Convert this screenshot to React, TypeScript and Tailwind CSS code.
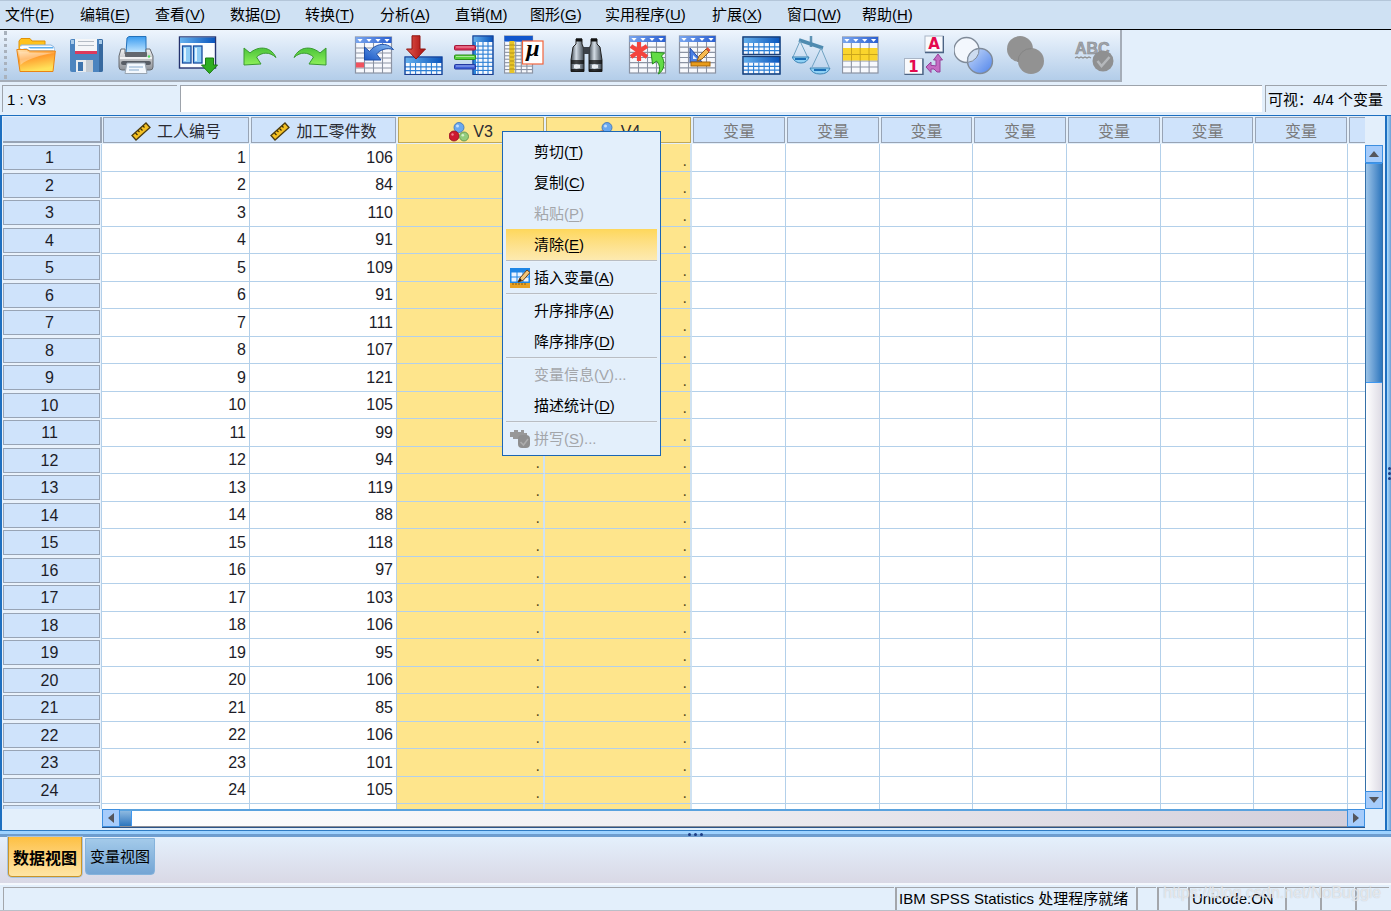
import React from "react";

type MenuEntry = { label: string; hotkey: string; dots?: boolean };

const menuBar: MenuEntry[] = [
  { label: "文件", hotkey: "F" },
  { label: "编辑", hotkey: "E" },
  { label: "查看", hotkey: "V" },
  { label: "数据", hotkey: "D" },
  { label: "转换", hotkey: "T" },
  { label: "分析", hotkey: "A" },
  { label: "直销", hotkey: "M" },
  { label: "图形", hotkey: "G" },
  { label: "实用程序", hotkey: "U" },
  { label: "扩展", hotkey: "X" },
  { label: "窗口", hotkey: "W" },
  { label: "帮助", hotkey: "H" },
];

const parts = [
  106, 84, 110, 91, 109, 91, 111, 107, 121, 105, 99, 94, 119, 88, 118, 97, 103, 106, 95, 106, 85,
  106, 101, 105,
];

function Label({ label, hotkey, dots }: MenuEntry) {
  return (
    <>
      {label}(<span className="underline underline-offset-2">{hotkey}</span>){dots ? "..." : ""}
    </>
  );
}

/* ---------- toolbar drawings ---------- */

function Svg({ children }: { children: React.ReactNode }) {
  return (
    <svg viewBox="0 0 40 40" className="size-10" aria-hidden="true">
      {children}
    </svg>
  );
}

type SheetProps = {
  x: number;
  y: number;
  w: number;
  h: number;
  cols: number;
  rows: number;
  head?: number;
  arrows?: boolean;
  line?: string;
};

function Sheet({ x, y, w, h, cols, rows, head = 6, arrows, line = "#8b93a3" }: SheetProps) {
  const cw = w / cols;
  const rh = (h - head) / rows;
  return (
    <g>
      <rect x={x} y={y} width={w} height={h} fill="#f7f9fd" />
      {Array.from({ length: cols - 1 }, (_, i) => (
        <path key={"c" + i} d={`M${x + cw * (i + 1)} ${y + head}V${y + h}`} stroke={line} strokeWidth="1.1" />
      ))}
      {Array.from({ length: rows - 1 }, (_, i) => (
        <path key={"r" + i} d={`M${x} ${y + head + rh * (i + 1)}H${x + w}`} stroke={line} strokeWidth="1.1" />
      ))}
      <rect x={x} y={y} width={w} height={h} fill="none" stroke={line} strokeWidth="1.2" />
      <rect x={x} y={y} width={w} height={head} fill="url(#blueHead)" />
      {arrows &&
        Array.from({ length: cols }, (_, i) => (
          <path key={"a" + i} d={`M${x + cw * (i + 0.5) - 2.6} ${y + 2}h5.2l-2.6 3z`} fill="#fff" />
        ))}
    </g>
  );
}

function Defs() {
  return (
    <svg className="absolute size-0" aria-hidden="true">
      <defs>
        <linearGradient id="blueHead" x1="0" x2="1">
          <stop offset="0" stopColor="#7aa6ee" />
          <stop offset="1" stopColor="#2a5fd0" />
        </linearGradient>
        <linearGradient id="deepBlue" x1="0" x2="1">
          <stop offset="0" stopColor="#66b2ee" />
          <stop offset="1" stopColor="#0a55bd" />
        </linearGradient>
        <linearGradient id="orange" x1="0" y1="0" x2="0.3" y2="1">
          <stop offset="0" stopColor="#ffe3b0" />
          <stop offset="0.45" stopColor="#ff9c2e" />
          <stop offset="1" stopColor="#ffe25a" />
        </linearGradient>
        <linearGradient id="green" x1="0" y1="0" x2="0" y2="1">
          <stop offset="0" stopColor="#4cc43a" />
          <stop offset="1" stopColor="#8ef05a" />
        </linearGradient>
        <linearGradient id="paper" x1="0" y1="0" x2="0" y2="1">
          <stop offset="0" stopColor="#3b9cf0" />
          <stop offset="1" stopColor="#c6e8ff" />
        </linearGradient>
        <linearGradient id="metal" x1="0" x2="1">
          <stop offset="0" stopColor="#3b444e" />
          <stop offset="0.4" stopColor="#d4dde6" />
          <stop offset="1" stopColor="#3a444e" />
        </linearGradient>
        <linearGradient id="body" x1="0" y1="0" x2="0" y2="1">
          <stop offset="0" stopColor="#f4f4f4" />
          <stop offset="1" stopColor="#8c9096" />
        </linearGradient>
        <linearGradient id="redArrow" x1="0" x2="1">
          <stop offset="0" stopColor="#e2594e" />
          <stop offset="1" stopColor="#a80c0c" />
        </linearGradient>
        <linearGradient id="swoop" x1="1" y1="0" x2="0" y2="1">
          <stop offset="0" stopColor="#86baf2" />
          <stop offset="1" stopColor="#1b58c6" />
        </linearGradient>
        <linearGradient id="disc" x1="0" y1="0" x2="1" y2="1">
          <stop offset="0" stopColor="#c9dcfa" />
          <stop offset="1" stopColor="#4f83ea" />
        </linearGradient>
      </defs>
    </svg>
  );
}

const OpenIcon = () => (
  <Svg>
    <path d="M3 16V6l2-2.500h9l2 2.500h13v10z" fill="#ffc21c" stroke="#e09008" />
    <path d="M5 10h30l3 2v8H4z" fill="#f8fbff" stroke="#8ab4de" />
    <path d="M4 15l7-3h26v6H3z" fill="#5aaef0" />
    <path d="M4 12.500h7l3 2h24" fill="none" stroke="#fff" strokeWidth="2" />
    <path d="M0.800 14.500h10l3 1.500h25.500L37 36.500H4z" fill="url(#orange)" stroke="#ea8412" strokeLinejoin="round" />
    <path d="M3 16.500h8l3 1.500h22c-9 2-24 5-31.500 12z" fill="#fff" opacity=".35" />
  </Svg>
);

const SaveIcon = () => (
  <Svg>
    <rect x="4" y="4" width="33" height="33" rx="2" fill="#4b84bf" />
    <path d="M33 4h2q2 0 2 2v29q0 2-2 2h-2z" fill="#37699f" />
    <rect x="9" y="4" width="22" height="15" fill="#f4f6f8" />
    <path d="M12 6.500h16M12 10.500h16" stroke="#b5bcc4" />
    <rect x="9" y="16" width="22" height="3" fill="#dc3a5c" />
    <rect x="5" y="5" width="3" height="4" fill="#a9cbe8" />
    <rect x="33" y="5" width="3" height="4" fill="#a9cbe8" />
    <rect x="10" y="25" width="17" height="12" fill="#e8ecf0" />
    <rect x="12" y="27" width="5" height="9" fill="#3d74ae" />
    <rect x="20" y="25" width="7" height="12" fill="#c2cad2" />
  </Svg>
);

const PrintIcon = () => (
  <Svg>
    <path d="M11 3l2-1.500h17V18H10z" fill="url(#paper)" stroke="#2472ba" />
    <path d="M9 14H5l-2 7v11q0 3 3 3h28q3 0 3-3V21l-3-7h-4v5H9z" fill="url(#body)" stroke="#666a70" />
    <rect x="9" y="17" width="22" height="5" rx="1" fill="#63676e" />
    <path d="M4 23h32" stroke="#fff" strokeWidth="1.500" />
    <circle cx="33" cy="21.500" r="1.200" fill="#50e05a" />
    <rect x="5" y="26" width="30" height="4" rx="2" fill="#585d64" />
    <path d="M11 28h18l2 10.500H9z" fill="#f3f8fd" stroke="#9aa6b2" />
    <path d="M13 32h14M13 35h10" stroke="#86a9cc" />
  </Svg>
);

const RecallIcon = () => (
  <Svg>
    <rect x="1.500" y="2" width="36" height="31" fill="#fbfdff" stroke="#24336e" strokeWidth="1.400" />
    <rect x="2" y="2.500" width="35" height="5.500" fill="url(#deepBlue)" />
    <rect x="4.500" y="11" width="8.500" height="17" fill="#8fcdf6" stroke="#164c9e" strokeWidth="1.300" />
    <rect x="15.500" y="11" width="8.500" height="17" fill="#8fcdf6" stroke="#164c9e" strokeWidth="1.300" />
    <path d="M7 13v13M18 13v13" stroke="#dff3ff" strokeWidth="2" />
    <path d="M27.500 23h8v7h4l-8 8.500-8-8.500h4z" fill="#2fae20" stroke="#1b7a12" />
  </Svg>
);

const UndoIcon = () => (
  <Svg>
    <path d="M4 13l6 5C17 11.500 30 10 36 22.500 29.500 16.500 22 17 16.500 22L21 29 4 30z" fill="url(#green)" stroke="#3a9a32" strokeLinejoin="round" />
  </Svg>
);

const RedoIcon = () => (
  <Svg>
    <path d="M36 13l-6 5C23 11.500 10 10 4 22.500 10.500 16.500 18 17 23.500 22L19 29l17 1z" fill="url(#green)" stroke="#3a9a32" strokeLinejoin="round" />
  </Svg>
);

const GotoCaseIcon = () => (
  <Svg>
    <Sheet x={1.5} y={2} w={36} h={36} cols={4} rows={6} arrows />
    <rect x="2" y="27.500" width="8" height="5" fill="#f0525e" />
    <path d="M10.500 12l5 4.500c6-8 17-10 24-2-7-2-13 0-17 4.500l4.500 6H10.500z" fill="url(#swoop)" stroke="#1d4ea8" />
  </Svg>
);

const GotoVarIcon = () => (
  <Svg>
    <Sheet x={1} y={22} w={37} h={17.5} cols={7} rows={3} head={6} line="#2b7fd6" />
    <rect x="1" y="22" width="37" height="6" fill="url(#deepBlue)" />
    <rect x="1" y="22" width="37" height="17.500" fill="none" stroke="#1e3d8c" />
    <path d="M8 0.800h8V14h5.500L12 24 2.500 14H8z" fill="url(#redArrow)" stroke="#8f1410" />
  </Svg>
);

const VariablesIcon = () => (
  <Svg>
    <Sheet x={19} y={1} w={20} h={38.5} cols={4} rows={8} head={6} line="#2b7fd6" />
    <rect x="19" y="1" width="20" height="6" fill="url(#deepBlue)" />
    <path d="M19 7h3v32h-3z" fill="#2a86dc" />
    <rect x="19" y="1" width="20" height="38.500" fill="none" stroke="#1e3d8c" />
    <rect x="0.500" y="10.500" width="21" height="4.500" rx="1" fill="#dd3558" stroke="#a0183a" />
    <rect x="0.500" y="20" width="21" height="4.500" rx="1" fill="#58d23a" stroke="#2d8c1c" />
    <rect x="0.500" y="29.500" width="21" height="4.500" rx="1" fill="#4060d8" stroke="#2438a0" />
    <path d="M2 12h18M2 21.500h18M2 31h18" stroke="#fff" opacity=".5" />
  </Svg>
);

const DescriptivesIcon = () => (
  <Svg>
    <Sheet x={0.5} y={1} w={28} h={37} cols={5} rows={9} head={6} />
    <rect x="0.500" y="1" width="28" height="5" fill="#1156cc" />
    <rect x="5.500" y="6" width="5" height="32" fill="#e8c426" />
    <path d="M5.500 10h5M5.500 14h5M5.500 18h5M5.500 22h5M5.500 26h5M5.500 30h5M5.500 34h5" stroke="#b09018" />
    <rect x="18.500" y="6" width="20.500" height="23" fill="#fff" stroke="#f2643c" strokeWidth="1.200" />
    <text x="29" y="21" textAnchor="middle" fontFamily="Liberation Serif, serif" fontWeight="700" fontStyle="italic" fontSize="24">
      μ
    </text>
  </Svg>
);

const FindIcon = () => (
  <Svg>
    <path d="M10 4h6v5l2 5v22.500H5V25l2-13 3-3z" fill="url(#metal)" stroke="#222" />
    <path d="M25 4h6v5l3 3 2 13v11.500H23V14l2-5z" fill="url(#metal)" stroke="#222" />
    <rect x="17.500" y="12" width="6" height="7" fill="#3a4048" />
    <path d="M10 5h6M25 5h6" stroke="#111" strokeWidth="3" />
    <path d="M5 25h13v4H5zM23 25h13v4H23z" fill="#111" opacity=".75" />
    <path d="M5 34h13v2.500H5zM23 34h13v2.500H23z" fill="#111" opacity=".85" />
    <path d="M8 31.500h6M26 31.500h6" stroke="#e9edf2" strokeWidth="3" />
  </Svg>
);

const InsertCaseIcon = () => (
  <Svg>
    <Sheet x={1.5} y={1} w={36} h={37} cols={4} rows={6} arrows />
    <path d="M11 7v19M3 11l16 11M19 11L3 22" stroke="#f4443e" strokeWidth="4.200" />
    <path d="M23 17l13.500 1-3 3c4 6 3 14-3 18 2-6 1-10-2-13l-4 3z" fill="#62dc46" stroke="#258c1c" />
  </Svg>
);

const InsertVarIcon = () => (
  <Svg>
    <Sheet x={1.5} y={1} w={36} h={37} cols={4} rows={6} arrows />
    <path d="M12 13v14h12z" fill="#4a80e4" stroke="#1f49a8" />
    <path d="M15 20v4h4z" fill="#e6effc" />
    <path d="M19 26l2-5 7-7 3 3-7 7z" fill="#f7ba50" stroke="#8a5a1c" />
    <path d="M28 14l3 3 1.500-2-3-3z" fill="#e24f38" />
    <rect x="13" y="27" width="19" height="4" fill="#e89c1a" stroke="#a3640c" />
  </Svg>
);

const SplitIcon = () => (
  <Svg>
    {[2, 21.5].map((y) => (
      <g key={y}>
        <Sheet x={1} y={y} w={37} h={17.5} cols={7} rows={3} head={6} line="#2b7fd6" />
        <rect x="1" y={y} width="37" height="6" fill="url(#deepBlue)" />
        <rect x="1" y={y} width="37" height="17.500" fill="none" stroke="#1e3d70" strokeWidth="1.300" />
      </g>
    ))}
  </Svg>
);

const WeightIcon = () => (
  <Svg>
    <path d="M19 1v11" stroke="#5f93b4" strokeWidth="2.500" />
    <path d="M7 5l24 8" stroke="#4f8bb0" strokeWidth="3.500" />
    <path d="M8 6L1 22M8 6l8 17M29 13l-9 19M29 13l8 19" stroke="#6fa2c2" fill="none" />
    <path d="M0 22h17q-2 6-8 6t-9-6z" fill="#8fd0f4" stroke="#3f84b4" />
    <path d="M18 33h20q-2 6-10 6t-10-6z" fill="#8fd0f4" stroke="#3f84b4" />
    <path d="M3 24h11M22 35h12" stroke="#1c6fb6" strokeWidth="2" />
  </Svg>
);

const SelectIcon = () => (
  <Svg>
    <Sheet x={0.5} y={2} w={35.5} h={36} cols={4} rows={5} head={6} arrows />
    <rect x="1" y="13" width="34.500" height="12.500" fill="#fad42c" />
    <path d="M1 19.500h34.500M9.500 13v12.500M18.200 13v12.500M27 13v12.500" stroke="#c9a41c" />
  </Svg>
);

const ValueLabelsIcon = () => (
  <Svg>
    <rect x="21" y="1" width="18" height="16" fill="#f8fafd" stroke="#a9b5c6" />
    <path d="M21 17.500h18.500V1" fill="none" stroke="#4c6484" strokeWidth="1.400" />
    <text x="30" y="14" textAnchor="middle" fontFamily="DejaVu Sans, sans-serif" fontWeight="700" fontSize="15" fill="#e4084e">
      A
    </text>
    <rect x="0.500" y="23.500" width="18" height="16" fill="#f8fafd" stroke="#a9b5c6" />
    <path d="M0.500 39.500h18.500V23.500" fill="none" stroke="#4c6484" strokeWidth="1.400" />
    <text x="9.500" y="37" textAnchor="middle" fontFamily="DejaVu Sans, sans-serif" fontWeight="700" fontSize="15" fill="#e4084e">
      1
    </text>
    <path d="M34 19l4.500 6H36v12h-3l-3-3h-3v3.500L22 32l5-5v3.500h2l3 .5v-6h-2.500z" fill="#c56cc4" stroke="#97409a" />
  </Svg>
);

const UseSetsIcon = () => (
  <Svg>
    <circle cx="12.500" cy="15" r="12.500" fill="#f3f7fd" stroke="#7f8a98" strokeWidth="1.400" />
    <circle cx="26" cy="26" r="12.500" fill="url(#disc)" stroke="#7f8a98" strokeWidth="1.400" />
    <path d="M13.600 27.400A12.500 12.500 0 0 1 25 13.600 12.500 12.500 0 0 1 13.600 27.400z" fill="#cddcf0" stroke="#7f8a98" />
  </Svg>
);

const ShowAllIcon = () => (
  <Svg>
    <circle cx="16" cy="14" r="13" fill="#929292" />
    <circle cx="27" cy="26" r="13" fill="#929292" />
    <path d="M14 27A13 13 0 0 1 27.500 13.500" fill="none" stroke="#858585" />
  </Svg>
);

const SpellIcon = () => (
  <Svg>
    <text x="1" y="19" fontFamily="Liberation Sans, sans-serif" fontWeight="700" fontSize="16" fill="#a2a5aa" stroke="#868a90" strokeWidth=".6">
      ABC
    </text>
    <path d="M1 23l2-1 2 1 2-1 2 1 2-1 2 1 2-1 2 1" fill="none" stroke="#909090" strokeWidth="1.300" />
    <circle cx="29" cy="26" r="10.500" fill="#8f9091" />
    <path d="M23.500 26l4 5 8-9" fill="none" stroke="#b5b8bb" strokeWidth="2.500" />
  </Svg>
);

type Tool = { name: string; Icon: () => React.ReactElement };

const toolGroups: { spacing: string; tools: Tool[] }[] = [
  {
    spacing: "ml-1",
    tools: [
      { name: "打开", Icon: OpenIcon },
      { name: "保存", Icon: SaveIcon },
      { name: "打印", Icon: PrintIcon },
    ],
  },
  { spacing: "ml-3", tools: [{ name: "重新调用对话框", Icon: RecallIcon }] },
  {
    spacing: "ml-3",
    tools: [
      { name: "撤销", Icon: UndoIcon },
      { name: "重做", Icon: RedoIcon },
    ],
  },
  {
    spacing: "ml-3.5",
    tools: [
      { name: "转到个案", Icon: GotoCaseIcon },
      { name: "转到变量", Icon: GotoVarIcon },
      { name: "变量", Icon: VariablesIcon },
      { name: "运行描述统计", Icon: DescriptivesIcon },
    ],
  },
  { spacing: "ml-3", tools: [{ name: "查找", Icon: FindIcon }] },
  {
    spacing: "ml-3",
    tools: [
      { name: "插入个案", Icon: InsertCaseIcon },
      { name: "插入变量", Icon: InsertVarIcon },
    ],
  },
  {
    spacing: "ml-3.5",
    tools: [
      { name: "拆分文件", Icon: SplitIcon },
      { name: "个案加权", Icon: WeightIcon },
      { name: "选择个案", Icon: SelectIcon },
    ],
  },
  {
    spacing: "ml-3",
    tools: [
      { name: "值标签", Icon: ValueLabelsIcon },
      { name: "使用变量集", Icon: UseSetsIcon },
      { name: "显示所有变量", Icon: ShowAllIcon },
    ],
  },
  { spacing: "ml-5", tools: [{ name: "拼写检查", Icon: SpellIcon }] },
];

/* ---------- grid ---------- */

const RulerIcon = () => (
  <svg viewBox="0 0 20 20" className="size-5" aria-hidden="true">
    <path d="M1 13.500L15 1l4 4.500L5 18z" fill="#f4c022" stroke="#4c3c10" strokeWidth="1.300" />
    <path d="M4.500 11l2 2M7 8.500L8.500 10M9.500 6.500l2 2M12 4L13.500 5.500" stroke="#3c2e08" strokeWidth="1.200" />
  </svg>
);

const NominalIcon = () => (
  <svg viewBox="0 0 20 20" className="size-5" aria-hidden="true">
    <circle cx="10" cy="5.500" r="5" fill="#6aa8ee" stroke="#3a70b8" strokeWidth=".8" />
    <circle cx="5" cy="14" r="5" fill="#cc1a30" stroke="#8c1020" strokeWidth=".8" />
    <circle cx="15" cy="14.500" r="4.500" fill="#93cc7c" stroke="#5a8c48" strokeWidth=".8" />
    <circle cx="8.500" cy="4" r="1.500" fill="#c4e0fc" />
    <circle cx="3.500" cy="12.500" r="1.200" fill="#f08090" />
    <circle cx="13.800" cy="13.200" r="1.300" fill="#d4f0c8" />
  </svg>
);

function HeaderBox({ children, selected }: { children?: React.ReactNode; selected?: boolean }) {
  return (
    <div
      className={
        selected
          ? "mx-px flex h-[26px] items-center justify-center gap-1 border border-[#bfa758] bg-[#fee58c] pt-1 whitespace-nowrap"
          : "mx-px flex h-[26px] items-center justify-center gap-1 border border-[#98a4b5] bg-[#cfe3fb] pt-1 whitespace-nowrap"
      }
    >
      {children}
    </div>
  );
}

function DataGrid() {
  const rows: { n?: number; p?: number }[] = [...parts.map((p, i) => ({ n: i + 1, p })), {}];
  const cell = "border-r border-b border-[#b3d0ea] p-0 pr-[3px] text-right align-middle";
  const selected =
    "border-b border-b-[#b3d0ea] border-r-2 border-r-[#cfe2f2] bg-[#fee58c] p-0 pt-1.5 pr-[3px] text-right align-middle text-[#5b4d24]";
  return (
    <table className="w-full table-fixed border-separate border-spacing-0 text-[16px] leading-5 text-[#1c1c28]">
      <colgroup>
        <col className="w-[100px]" />
        <col className="w-[148px]" />
        <col className="w-[147px]" />
        <col className="w-[148px]" />
        <col className="w-[147px]" />
        <col className="w-[94px]" />
        <col className="w-[94px]" />
        <col className="w-[93px]" />
        <col className="w-[94px]" />
        <col className="w-[94px]" />
        <col className="w-[93px]" />
        <col className="w-[94px]" />
        <col />
      </colgroup>
      <thead>
        <tr className="h-[27px] bg-[#e3effb] text-[#2b2b33]">
          <td className="p-0 pl-px align-top">
            <div className="h-[26px] border-r-2 border-b-2 border-[#98a4b5] bg-[#cfe3fb]" />
          </td>
          <th className="p-0 align-top font-normal">
            <HeaderBox>
              <RulerIcon />
              <span className="pl-0.5">工人编号</span>
            </HeaderBox>
          </th>
          <th className="p-0 align-top font-normal">
            <HeaderBox>
              <RulerIcon />
              <span className="pl-0.5">加工零件数</span>
            </HeaderBox>
          </th>
          <th className="p-0 align-top font-normal">
            <HeaderBox selected>
              <NominalIcon />
              <span>V3</span>
            </HeaderBox>
          </th>
          <th className="p-0 align-top font-normal">
            <HeaderBox selected>
              <NominalIcon />
              <span>V4</span>
            </HeaderBox>
          </th>
          {Array.from({ length: 7 }, (_, i) => (
            <th key={i} className="p-0 align-top font-normal text-[#7a7a7a]">
              <HeaderBox>变量</HeaderBox>
            </th>
          ))}
          <td className="overflow-hidden p-0 align-top">
            <div className="ml-px h-[26px] border border-r-0 border-[#98a4b5] bg-[#cfe3fb]" />
          </td>
        </tr>
      </thead>
      <tbody>
        {rows.map(({ n, p }, r) => (
          <tr key={r} className="odd:h-[28px] even:h-[27px]">
            <th className="border-r border-[#b3d0ea] bg-[#e9f2fc] p-0 pt-px pr-px pl-px align-top font-normal">
              <div className="h-[25px] border border-[#98a4b5] bg-[#cfe3fb] pt-0.5 pr-1">{n}</div>
            </th>
            <td className={cell}>{n}</td>
            <td className={cell}>{p}</td>
            <td className={selected}>{n && "."}</td>
            <td className={selected}>{n && "."}</td>
            {Array.from({ length: 7 }, (_, i) => (
              <td key={i} className={cell} />
            ))}
            <td className="border-b border-[#b3d0ea] p-0" />
          </tr>
        ))}
      </tbody>
    </table>
  );
}

const arrowButton = "flex size-[18px] shrink-0 items-center justify-center border border-[#3d8fe0] bg-[#a6ccfb] p-0";

function Arrow({ d }: { d: string }) {
  return (
    <svg viewBox="0 0 12 12" className="size-3" aria-hidden="true">
      <path d={d} fill="#55565c" />
    </svg>
  );
}

/* ---------- context menu ---------- */

const SheetEditIcon = () => (
  <svg viewBox="0 0 20 20" className="size-5" aria-hidden="true">
    <rect width="20" height="20" fill="#1e86e6" />
    <path d="M1.500 4.500h5v4h-5zM7.500 4.500h5v4h-5zM13.500 4.500h5v4h-5zM1.500 9.500h5v4h-5zM7.500 9.500h5v4h-5zM13.500 9.500h5v4h-5z" fill="#eaf4ff" />
    <rect y="15" width="20" height="5" fill="#e7a022" />
    <path d="M3 15v2M6 15v2M9 15v2M12 15v2M15 15v2" stroke="#8a5a0c" />
    <path d="M8 14l2-4 7-8 3 2.500-7 8z" fill="#f2c679" stroke="#6a3f14" />
    <path d="M8 14l2-4 2 2.500z" fill="#2c2018" />
  </svg>
);

const SpellSmallIcon = () => (
  <svg viewBox="0 0 20 20" className="size-5" aria-hidden="true">
    <path d="M0 3h4V1h4v2h3V1h3v3h3v6H3V8H0z" fill="#989898" />
    <rect x="8" y="6" width="12" height="13" rx="4" fill="#8f8f8f" />
    <path d="M10.500 13l3 3 4.500-6" fill="none" stroke="#adadad" strokeWidth="1.500" />
  </svg>
);

type ContextItem = MenuEntry & {
  disabled?: boolean;
  active?: boolean;
  divided?: boolean;
  Icon?: () => React.ReactElement;
};

const contextItems: ContextItem[] = [
  { label: "剪切", hotkey: "T" },
  { label: "复制", hotkey: "C" },
  { label: "粘贴", hotkey: "P", disabled: true },
  { label: "清除", hotkey: "E", active: true },
  { label: "插入变量", hotkey: "A", divided: true, Icon: SheetEditIcon },
  { label: "升序排序", hotkey: "A", divided: true },
  { label: "降序排序", hotkey: "D" },
  { label: "变量信息", hotkey: "V", divided: true, disabled: true, dots: true },
  { label: "描述统计", hotkey: "D" },
  { label: "拼写", hotkey: "S", divided: true, disabled: true, dots: true, Icon: SpellSmallIcon },
];

function ContextMenu() {
  return (
    <div
      role="menu"
      className="absolute top-[131px] left-[502px] z-10 w-[159px] border border-[#1b66b4] bg-[#e3effb] px-[3px] pt-1 pb-px text-[15px] leading-5"
    >
      {contextItems.map((item) => (
        <React.Fragment key={item.label}>
          {item.divided && <div role="separator" className="h-0.5 border-t border-[#b9bdc3] bg-[#e9f2fb]" />}
          <button
            type="button"
            role="menuitem"
            disabled={item.disabled}
            className={
              item.active
                ? "flex h-[31px] w-full items-center bg-linear-to-b from-[#fed75a] to-[#fdeab0] pl-1 text-black"
                : "flex h-[31px] w-full items-center pl-1 text-black disabled:text-[#a3a6aa]"
            }
          >
            <span className="w-6 shrink-0">{item.Icon && <item.Icon />}</span>
            <span className="whitespace-nowrap">
              <Label label={item.label} hotkey={item.hotkey} dots={item.dots} />
            </span>
          </button>
        </React.Fragment>
      ))}
    </div>
  );
}

/* ---------- status bar ---------- */

const statusCell = "h-full shrink-0 overflow-hidden border-t border-l-2 border-[#a3a6ab] pl-0.5 leading-[22px] whitespace-nowrap";

export default function App() {
  return (
    <div className="relative flex h-screen flex-col overflow-hidden bg-[#e3effb] font-['Liberation_Sans','Noto_Sans_CJK_SC',sans-serif] text-[15px] leading-5 text-black">
      <Defs />
      <nav className="flex h-[30px] shrink-0 items-center border-t border-b border-t-[#b4c6d9] border-b-black bg-[#cfe1f3] pl-[5px]">
        {menuBar.map((m) => (
          <button
            key={m.label}
            type="button"
            className={
              m.label.length > 2
                ? "w-[107px] text-left whitespace-nowrap"
                : "w-[75px] text-left whitespace-nowrap"
            }
          >
            <Label {...m} />
          </button>
        ))}
      </nav>

      <div className="flex h-[52px] shrink-0">
        <div className="flex items-center border-r-2 border-b-2 border-[#a5adb8] bg-linear-to-b from-[#eef5fd] to-[#b3cde9] pr-[1px] pl-1">
          <div className="h-12 w-[3px] border-l-3 border-dotted border-[#a9b2bd]" />
          {toolGroups.map((g, i) => (
            <div key={i} className={"flex " + g.spacing}>
              {g.tools.map(({ name, Icon }) => (
                <button key={name} type="button" aria-label={name} className="flex h-12 w-[50px] items-center justify-center">
                  <Icon />
                </button>
              ))}
            </div>
          ))}
        </div>
      </div>

      <div className="flex h-[33px] shrink-0 gap-[3px] pt-[3px] pr-1 pb-[3px] pl-0.5">
        <div className="w-[175px] shrink-0 border-t border-l border-[#9da3ab] pt-1 pl-1">1 : V3</div>
        <input
          aria-label="单元格值"
          className="min-w-0 flex-1 border-t border-l border-[#9da3ab] bg-white px-1 outline-none"
        />
        <div className="w-[122px] shrink-0 border-t border-l border-[#9da3ab] pt-1 pl-0.5 whitespace-nowrap">
          可视：4/4 个变量
        </div>
      </div>

      <div className="flex min-h-0 flex-1">
        <main className="flex min-w-0 flex-1 flex-col border-t border-r-2 border-l-2 border-[#1d6fc0] bg-[#e3effb]">
          <div className="flex min-h-0 flex-1">
            <div className="min-w-0 flex-1 overflow-hidden bg-white">
              <div className="h-px bg-[#e3effb]" />
              <DataGrid />
            </div>
            <div className="flex w-5 shrink-0 flex-col pt-[29px] pr-0.5">
              <button type="button" aria-label="向上滚动" className={arrowButton}>
                <Arrow d="M6 3l5 6H1z" />
              </button>
              <div className="flex flex-1 flex-col border-x border-[#3570a8] bg-linear-to-r from-white to-[#dcdae4]">
                <div className="h-[35%] border-y border-[#3d97f0] bg-linear-to-r from-[#9cc4e8] to-[#2b76bd]" />
              </div>
              <button type="button" aria-label="向下滚动" className={arrowButton}>
                <Arrow d="M1 3h10L6 9z" />
              </button>
            </div>
          </div>
          <div className="flex h-[21px] shrink-0 pr-5 pb-0.5 pl-[100px]">
            <div className="flex flex-1 border-b border-[#2c5488]">
              <button type="button" aria-label="向左滚动" className={arrowButton}>
                <Arrow d="M9 1v10L3 6z" />
              </button>
              <div className="flex flex-1 border-t-2 border-b border-t-[#5aa2de] border-b-[#8b8f98] bg-linear-to-r from-white via-[#edecf0] to-[#d3cfdb]">
                <div className="w-3 border-r border-[#3d97f0] bg-linear-to-b from-[#8db9e0] to-[#2b76bd]" />
              </div>
              <button type="button" aria-label="向右滚动" className={arrowButton}>
                <Arrow d="M3 1v10l6-5z" />
              </button>
            </div>
          </div>
        </main>
        <div className="flex w-1 shrink-0 flex-col items-center justify-center gap-0.5 border-t border-t-[#1d6fc0] bg-linear-to-r from-[#a9dcff] to-[#6a9fd6]">
          <span className="size-[3px] rounded-full bg-[#1b3d86]" />
          <span className="size-[3px] rounded-full bg-[#1b3d86]" />
          <span className="size-[3px] rounded-full bg-[#1b3d86]" />
        </div>
      </div>

      <div className="flex h-[7px] shrink-0 items-center justify-center gap-[3px] border-t border-[#2f7cc4] bg-linear-to-b from-[#9dd2ff] from-50% to-[#6d9dcf] to-50%">
        <span className="size-[3px] rounded-full bg-[#1b3d86]" />
        <span className="size-[3px] rounded-full bg-[#1b3d86]" />
        <span className="size-[3px] rounded-full bg-[#1b3d86]" />
      </div>

      <div className="flex h-12 shrink-0 items-start gap-[3px] border-b-2 border-[#f4f8fd] bg-linear-to-b from-[#e4f0fc] to-[#d9d8e5] pl-2">
        <button
          type="button"
          className="h-10 w-[74px] rounded-b border border-t-0 border-[#c9952a] bg-linear-to-b from-[#fdc040] to-[#fee5a4] pt-1 text-[16px] font-bold whitespace-nowrap shadow-[0_0_0_1px_#a8c4e0]"
        >
          数据视图
        </button>
        <button
          type="button"
          className="mt-px h-[37px] w-[70px] rounded-b border border-[#85b3dc] bg-linear-to-b from-[#a3caea] to-[#74a5d4] text-[15px] whitespace-nowrap"
        >
          变量视图
        </button>
      </div>

      <footer className="flex h-[26px] shrink-0 gap-px border-b border-[#b9bfc8] pt-0.5 pr-0.5 pl-[3px]">
        <div className="flex-1 border-t border-l border-[#a3a6ab]" />
        <div className={statusCell + " w-[240px]"}>IBM SPSS Statistics 处理程序就绪</div>
        <div className={statusCell + " w-[20px]"} />
        <div className={statusCell + " w-[30px]"} />
        <div className={statusCell + " w-[96px]"}>Unicode:ON</div>
        <div className={statusCell + " w-[34px]"} />
        <div className={statusCell + " w-[34px]"} />
        <div className={statusCell + " w-[34px]"} />
      </footer>

      <span className="pointer-events-none absolute right-2.5 bottom-2 text-[16px] leading-5 text-white/60 [text-shadow:0_0_1px_#b4bac2]">
        https://blog.csdn.net/NoBuggie
      </span>

      <ContextMenu />
    </div>
  );
}
